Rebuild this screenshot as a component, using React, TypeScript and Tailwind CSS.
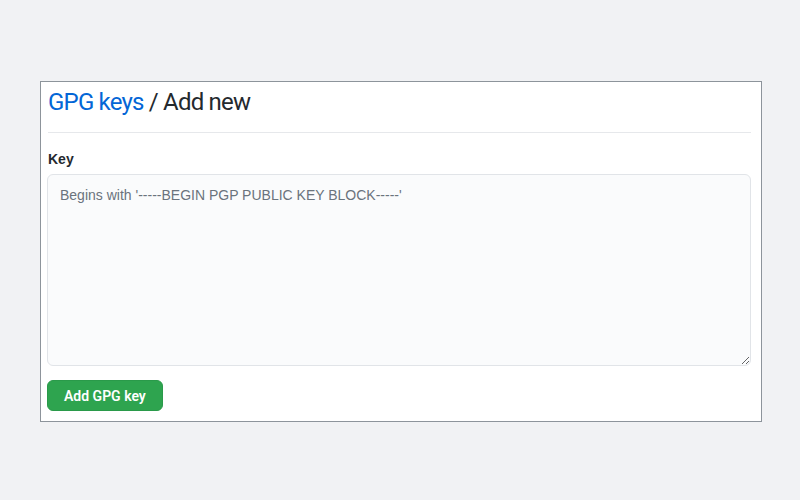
export default function App() {
  return (
    <div
      className="min-h-[500px] w-[800px] bg-[#f1f2f4] pt-[81px] pl-[40px]"
      style={{ fontFamily: '"Liberation Sans", Arial, sans-serif' }}
    >
      <div className="w-[722px] h-[341px] border border-[#8d949b] bg-white pl-[6px] pr-[10px] pt-[5px]">
        <div className="pb-[15px] border-b border-[#e6e8eb] ml-[1px]">
          <h1 className="font-['Roboto',sans-serif] text-[24px] leading-[30px] tracking-[-0.8px] text-[#24292e] font-normal">
            <a className="text-[#0366d6]">GPG keys</a> / Add new
          </h1>
        </div>
        <form className="pt-[16px]">
          <label className="block text-[14px] leading-[20px] font-bold text-[#24292e] mb-[5px] ml-[1px]">
            Key
          </label>
          <textarea
            className="block w-full h-[192px] rounded-[6px] border border-[#e1e4e8] bg-[#fafbfc] px-[12px] py-[10px] text-[14px] leading-[20px] text-[#24292e] placeholder:text-[#6a737d] outline-none"
            placeholder="Begins with '-----BEGIN PGP PUBLIC KEY BLOCK-----'"
          />
          <button
            type="button"
            className="mt-[14px] h-[31px] px-[16px] rounded-[6px] bg-[#2ea44f] border border-[#2a9a4a] text-white text-[14px] font-['Roboto',sans-serif] font-semibold leading-[20px]"
          >
            Add GPG key
          </button>
        </form>
      </div>
    </div>
  );
}
